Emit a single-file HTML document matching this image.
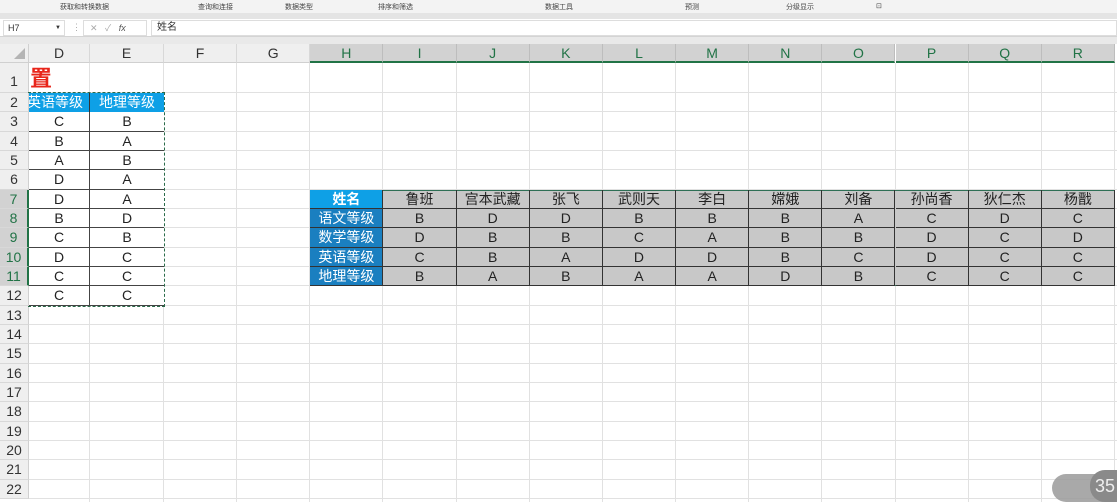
<!DOCTYPE html>
<html><head><meta charset="utf-8">
<style>
*{margin:0;padding:0;box-sizing:border-box}
body{width:1117px;height:502px;overflow:hidden;background:#fff;font-family:"Liberation Sans","Noto Sans CJK SC",sans-serif;position:relative}
.a{position:absolute}
.rib{left:0;top:0;width:1117px;height:13px;background:#f3f3f3;font-size:7px;color:#444}
.rib span{position:absolute;top:2px}
.band{left:0;top:13px;width:1117px;height:6px;background:#e4e4e4}
.fb{left:0;top:19px;width:1117px;height:18px;background:#fff;border-bottom:1px solid #d4d4d4}
.gap{left:0;top:37px;width:1117px;height:7px;background:#e9e9e9}
.ch{top:44px;height:19px;font-size:14px;color:#333;text-align:center;line-height:19px;background:#efefef;border-right:1px solid #d8d8d8;border-bottom:1px solid #d0d0d0}
.ch.s{background:#d2d2d2;color:#217346;border-bottom:2px solid #217346;border-right:1px solid #bdbdbd}
.rh{left:0;width:29px;font-size:14px;color:#333;text-align:center;background:#efefef;border-bottom:1px solid #d8d8d8;border-right:1px solid #d0d0d0}
.rh.s{background:#d2d2d2;color:#217346;border-right:2px solid #217346}
.gv{top:63px;width:1px;height:439px;background:#e1e1e1}
.gh{left:29px;height:1px;width:1088px;background:#e1e1e1}
.c{text-align:center;font-size:14px;color:#222}
</style></head><body>
<div class="a rib">
<span style="left:60px">获取和转换数据</span>
<span style="left:198px">查询和连接</span>
<span style="left:285px">数据类型</span>
<span style="left:378px">排序和筛选</span>
<span style="left:545px">数据工具</span>
<span style="left:685px">预测</span>
<span style="left:786px">分级显示</span>
<span style="left:876px">⊡</span>
</div>
<div class="a band"></div>
<div class="a fb">
<div class="a" style="left:3px;top:1px;width:62px;height:16px;border:1px solid #ddd;font-size:9px;line-height:14px;padding-left:4px;color:#333">H7<span style="position:absolute;right:3px;font-size:6px">▼</span></div>
<div class="a" style="left:72px;top:3px;font-size:9px;color:#aaa">⋮</div>
<div class="a" style="left:83px;top:1px;width:64px;height:16px;border:1px solid #ddd;font-size:9px;color:#aaa;line-height:14px;padding-left:6px">✕&nbsp;&nbsp;&nbsp;✓&nbsp;&nbsp;&nbsp;<i style="color:#555">fx</i></div>
<div class="a" style="left:151px;top:1px;width:966px;height:16px;border:1px solid #ddd;font-size:10px;line-height:14px;padding-left:5px;color:#333">姓名</div>
</div>
<div class="a gap"></div>
<div class="a" style="left:0;top:44px;width:29px;height:19px;background:#efefef;border-right:1px solid #d0d0d0;border-bottom:1px solid #d0d0d0"><div class="a" style="right:3px;bottom:3px;width:0;height:0;border-left:11px solid transparent;border-bottom:11px solid #b4b4b4"></div></div>
<div id="g"></div>
<div class="a" style="left:1052px;top:474px;width:65px;height:28px;background:#9a9a9a;border-radius:14px 0 0 14px;opacity:.85"></div>
<div class="a" style="left:1090px;top:470px;width:30px;height:32px;background:#8a8a8a;border-radius:15px 0 0 15px;color:#eee;font-size:18px;line-height:32px;padding-left:5px">35</div>
<script>
var cols=["D","E","F","G","H","I","J","K","L","M","N","O","P","Q","R"];
var xs=[29];for(var i=1;i<=15;i++){xs.push(i==1?90:xs[i-1]+73.3)}xs[2]=164;
for(i=3;i<=15;i++)xs[i]=164+(i-2)*73.15;
var ys=[63,93];for(i=2;i<=23;i++)ys.push(93+(i-1)*19.33);
var h="";
for(i=0;i<15;i++){var s=i>=4?" s":"";h+='<div class="a ch'+s+'" style="left:'+xs[i]+'px;width:'+(xs[i+1]-xs[i])+'px">'+cols[i]+'</div>';
h+='<div class="a gv" style="left:'+(xs[i+1]-1)+'px"></div>';}
for(var r=1;r<=22;r++){var t=ys[r-1],hh=ys[r]-ys[r-1];var s=(r>=7&&r<=11)?" s":"";
h+='<div class="a rh'+s+'" style="top:'+t+'px;height:'+hh+'px;line-height:'+(r==1?hh+6:hh)+'px">'+r+'</div>';
h+='<div class="a gh" style="top:'+(ys[r]-1)+'px"></div>';}
function cell(x1,x2,y1,y2,txt,st){return '<div class="a c" style="left:'+x1+'px;top:'+y1+'px;width:'+(x2-x1)+'px;height:'+(y2-y1)+'px;line-height:'+(y2-y1)+'px;'+(st||"")+'">'+txt+'</div>';}
// left table
h+='<div class="a" style="left:29px;top:'+ys[1]+'px;width:135px;height:'+(ys[12]-ys[1])+'px;background:#fff"></div>';
h+=cell(29,90,ys[1],ys[2],"英语等级","background:#0ea0e6;color:#fff;border-right:1px solid #333;text-indent:-8px;overflow:hidden;white-space:nowrap");
h+=cell(90,164,ys[1],ys[2],"地理等级","background:#0ea0e6;color:#fff");
var D="CBADDBCDCC",E="BABAADBCCC";
for(r=0;r<10;r++){var st="border-bottom:1px solid #444;";h+=cell(29,90,ys[r+2],ys[r+3],D[r],st+"border-right:1px solid #444");h+=cell(90,164,ys[r+2],ys[r+3],E[r],st);}
h+='<div class="a" style="left:28px;top:'+(ys[1]-1)+'px;width:137px;height:'+(ys[12]-ys[1]+2)+'px;border:1.5px dashed #2a6b4a;border-left:none"></div>';
h+='<div class="a" style="left:30px;top:65px;font-size:22px;font-weight:bold;color:#e8251a;line-height:28px">置</div>';
// right table
var names=["姓名","鲁班","宫本武藏","张飞","武则天","李白","嫦娥","刘备","孙尚香","狄仁杰","杨戬"];
var labs=["语文等级","数学等级","英语等级","地理等级"];
var data=["BDDBBBACDC","DBBCABBDCD","CBADDBCDCC","BABAADBCCC"];
h+='<div class="a" style="left:'+xs[4]+'px;top:'+ys[6]+'px;width:'+(xs[15]-xs[4])+'px;height:'+(ys[11]-ys[6])+'px;background:#c8c8c8;border:1px solid #2e6f55"></div>';
for(r=0;r<5;r++){for(var c=0;c<11;c++){var x1=xs[4+c],x2=xs[5+c],y1=ys[6+r],y2=ys[7+r];
var txt=r==0?names[c]:(c==0?labs[r-1]:data[r-1][c-1]);
var st="border-right:1px solid #333;border-bottom:1px solid #333;";
if(c==0)st+="background:"+(r==0?"#0ea0e6;font-weight:bold":"#1a7fc0")+";color:#fff;";
h+=cell(x1,x2,y1,y2,txt,st);}}
document.getElementById("g").innerHTML=h;
</script>
</body></html>
